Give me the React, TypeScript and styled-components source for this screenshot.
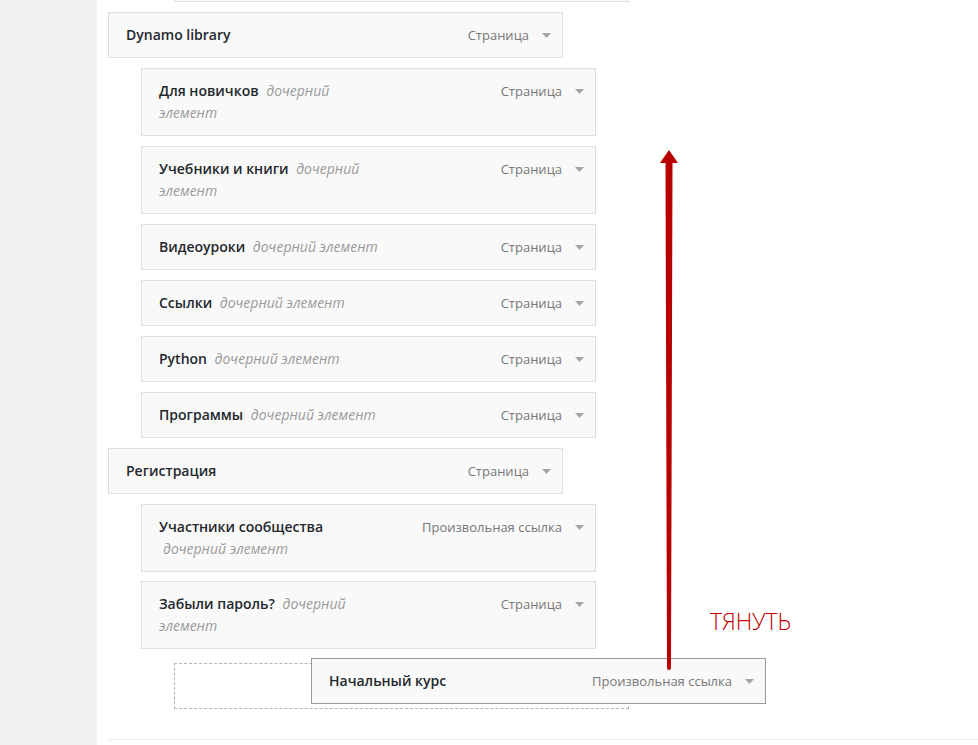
import React from "react";
import styled, { createGlobalStyle } from "styled-components";

const GlobalStyle = createGlobalStyle`
  html, body {
    margin: 0;
    padding: 0;
    background: #ffffff;
    font-family: "Open Sans", "Liberation Sans", sans-serif;
  }
  * { box-sizing: border-box; }
`;

const Page = styled.div`
  display: flex;
  width: 978px;
  height: 745px;
  overflow: hidden;
`;

const Sidebar = styled.aside`
  flex: 0 0 97px;
  background: #f1f1f1;
`;

const Main = styled.main`
  position: relative;
  flex: 1;
  padding-left: 11px;
  background: #ffffff;
`;

const MenuList = styled.ul`
  list-style: none;
  margin: -53.7px 0 0 0;
  padding: 0;
`;

const ItemRow = styled.li<{ $depth: number }>`
  margin: 9.93px 0 0 ${(p) => p.$depth * 33}px;
  width: 455px;
`;

const Handle = styled.div<{ $dragging?: boolean }>`
  display: flex;
  align-items: flex-start;
  width: 455px;
  min-height: 46px;
  padding: 11px 11px 11px 17px;
  background: #f9f9f9;
  border: 1px solid ${(p) => (p.$dragging ? "#9b9b9b" : "#dfdfdf")};
`;

const Title = styled.span`
  flex: 0 0 232px;
  font-size: 14px;
  line-height: 22px;
  font-weight: 600;
  color: #23282d;
`;

const SubLabel = styled.span`
  margin-left: 4px;
  font-style: italic;
  font-weight: 400;
  color: #999999;
`;

const Controls = styled.span`
  margin-left: auto;
  display: flex;
  align-items: center;
  gap: 13px;
  height: 22px;
  font-size: 13px;
  color: #777777;
  white-space: nowrap;
`;

const Caret = styled.svg`
  width: 9px;
  height: 5px;
  flex: 0 0 9px;
  margin-top: 1px;
`;

const Placeholder = styled.li<{ $depth: number }>`
  margin: 14px 0 0 ${(p) => p.$depth * 33}px;
  width: 455px;
  height: 46px;
  border: 1px dashed #b4b4b4;
`;

const Footer = styled.div`
  margin-top: 30px;
  border-top: 1px solid #ececec;
  height: 10px;
`;

const Dragged = styled.div`
  position: absolute;
  left: 214px;
  top: 658px;
`;

const DragArrow = styled.svg`
  position: absolute;
  left: 558px;
  top: 145px;
  width: 30px;
  height: 530px;
`;

const DragLabel = styled.div`
  position: absolute;
  left: 613px;
  top: 609px;
  font-size: 23px;
  line-height: 24px;
  font-weight: 300;
  color: #c40000;
  letter-spacing: -0.1px;
`;

type Item = {
  title: string;
  depth: number;
  type: string;
  sub?: boolean;
};

const items: Item[] = [
  { title: "Форум", depth: 2, type: "Страница", sub: true },
  { title: "Dynamo library", depth: 0, type: "Страница" },
  { title: "Для новичков", depth: 1, type: "Страница", sub: true },
  { title: "Учебники и книги", depth: 1, type: "Страница", sub: true },
  { title: "Видеоуроки", depth: 1, type: "Страница", sub: true },
  { title: "Ссылки", depth: 1, type: "Страница", sub: true },
  { title: "Python", depth: 1, type: "Страница", sub: true },
  { title: "Программы", depth: 1, type: "Страница", sub: true },
  { title: "Регистрация", depth: 0, type: "Страница" },
  { title: "Участники сообщества", depth: 1, type: "Произвольная ссылка", sub: true },
  { title: "Забыли пароль?", depth: 1, type: "Страница", sub: true },
];

const CaretIcon = () => (
  <Caret viewBox="0 0 9 5">
    <polygon points="0,0 9,0 4.5,5" fill="#a0a5aa" />
  </Caret>
);

const MenuHandle: React.FC<{ item: Item; dragging?: boolean }> = ({ item, dragging }) => (
  <Handle $dragging={dragging}>
    <Title>
      {item.title}
      {item.sub && <> <SubLabel>дочерний элемент</SubLabel></>}
    </Title>
    <Controls>
      {item.type}
      <CaretIcon />
    </Controls>
  </Handle>
);

export default function App() {
  return (
    <>
      <GlobalStyle />
      <Page>
        <Sidebar />
        <Main>
          <MenuList>
            {items.map((it, i) => (
              <ItemRow key={i} $depth={it.depth}>
                <MenuHandle item={it} />
              </ItemRow>
            ))}
            <Placeholder $depth={2} />
          </MenuList>
          <Footer />
          <Dragged>
            <MenuHandle item={{ title: "Начальный курс", depth: 2, type: "Произвольная ссылка" }} dragging />
          </Dragged>
          <DragArrow viewBox="0 0 30 530">
            <polygon points="14,5 23,18 5,18" fill="#b80000" />
            <polygon points="10.5,17 17.5,17 16,523 12,523" fill="#b80000" />
            <circle cx="14" cy="523" r="2" fill="#b80000" />
          </DragArrow>
          <DragLabel>ТЯНУТЬ</DragLabel>
        </Main>
      </Page>
    </>
  );
}
